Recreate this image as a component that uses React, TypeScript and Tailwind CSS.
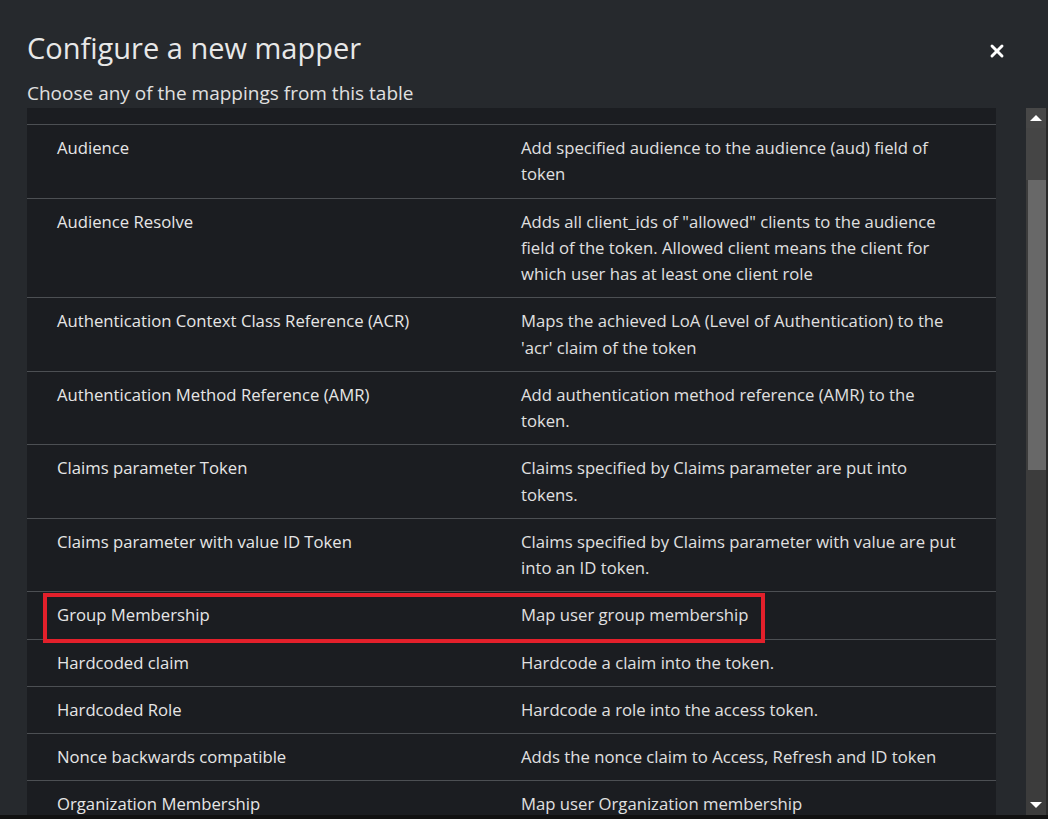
import { X } from "lucide-react";

const mappers = [
  { name: "Audience", desc: "Add specified audience to the audience (aud) field of token" },
  {
    name: "Audience Resolve",
    desc: 'Adds all client_ids of "allowed" clients to the audience field of the token. Allowed client means the client for which user has at least one client role',
  },
  {
    name: "Authentication Context Class Reference (ACR)",
    desc: "Maps the achieved LoA (Level of Authentication) to the 'acr' claim of the token",
  },
  {
    name: "Authentication Method Reference (AMR)",
    desc: "Add authentication method reference (AMR) to the token.",
  },
  { name: "Claims parameter Token", desc: "Claims specified by Claims parameter are put into tokens." },
  {
    name: "Claims parameter with value ID Token",
    desc: "Claims specified by Claims parameter with value are put into an ID token.",
  },
  { name: "Group Membership", desc: "Map user group membership", highlight: true },
  { name: "Hardcoded claim", desc: "Hardcode a claim into the token." },
  { name: "Hardcoded Role", desc: "Hardcode a role into the access token." },
  { name: "Nonce backwards compatible", desc: "Adds the nonce claim to Access, Refresh and ID token" },
  { name: "Organization Membership", desc: "Map user Organization membership" },
];

export default function App() {
  return (
    <div
      className="h-[819px] w-full overflow-hidden bg-[#26292d] text-[#e2e2e2] flex flex-col"
      style={{ fontFamily: "'Open Sans', 'Noto Sans', sans-serif" }}
    >
      {/* Header */}
      <div className="h-[108px] shrink-0 pl-[27px] pr-[39px] pt-[29px] flex">
        <div className="flex-1">
          <h1 className="text-[29px] leading-[38px] font-medium text-[#e8e8e8]">
            Configure a new mapper
          </h1>
          <p className="mt-[14px] text-[19px] leading-[24px] text-[#e0e0e0]">
            Choose any of the mappings from this table
          </p>
        </div>
        <button className="h-[24px] w-[24px] mt-[10px] flex items-center justify-center text-white">
          <X size={20} strokeWidth={3.5} />
        </button>
      </div>

      {/* Body */}
      <div className="flex-1 flex min-h-0">
        <div className="flex-1 min-w-0 overflow-hidden pl-[27px] pr-[30px]">
          <div className="bg-[#1b1d21] min-h-full">
            <div className="h-[17px] border-b border-[#4c4f53]" />
            {mappers.map((m) => (
              <div key={m.name} className="relative flex border-b border-[#4c4f53] text-[16.7px] leading-[26.25px]">
                <div className="w-[464px] shrink-0 pl-[30px] pr-[16px] pt-[10px] pb-[10px] text-[#e6e6e6]">
                  {m.name}
                </div>
                <div className="flex-1 pl-[30px] pr-[34px] pt-[10px] pb-[10px] text-[#e0e0e0]">
                  {m.desc}
                </div>
                {m.highlight && (
                  <div className="absolute left-[16px] top-[1px] w-[722px] h-[50px] border-[4px] border-[#e3202b] pointer-events-none" />
                )}
              </div>
            ))}
          </div>
        </div>
        {/* scrollbar */}
        <div className="w-[20px] shrink-0 flex flex-col bg-[#3c3c3c]">
          <div className="h-[20px] flex items-center justify-center bg-[#474747]">
            <div className="w-0 h-0 border-l-[6px] border-r-[6px] border-b-[6px] border-l-transparent border-r-transparent border-b-white" />
          </div>
          <div className="h-[52px] bg-[#454545]" />
          <div className="h-[290px] mx-[2px] mr-0 bg-[#686868]" />
          <div className="flex-1" />
          <div className="h-[20px] flex items-center justify-center">
            <div className="w-0 h-0 border-l-[6px] border-r-[6px] border-t-[6px] border-l-transparent border-r-transparent border-t-white" />
          </div>
        </div>
        <div className="w-[2px] shrink-0 bg-[#2a2a2a]" />
      </div>
      <div className="h-[4px] shrink-0 bg-[#111111]" />
    </div>
  );
}
